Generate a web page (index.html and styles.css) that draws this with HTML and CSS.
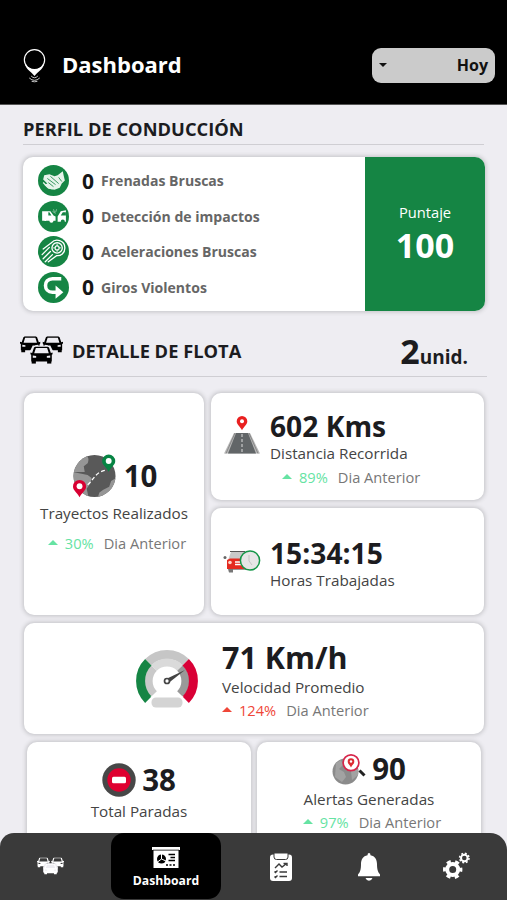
FILE: index.html
```html
<!DOCTYPE html>
<html lang="es">
<head>
<meta charset="utf-8">
<title>Dashboard</title>
<link rel="stylesheet" href="styles.css">
</head>
<body>
<svg class="defs" width="0" height="0">
  <symbol id="car" viewBox="0 0 24 19" preserveAspectRatio="none">
    <path fill-rule="evenodd" d="M5.500 0h13l1.500 1 2 6 2-.5v2L23 9v7.500h-.5V19H18v-2.500H6V19H1.500v-2.500H1V9L0 8.500v-2l2 .5 2-6zM6 1.700L4.200 7.500h15.600L18 1.700zM2.700 10v2.400h3.600V10.500zM21.300 10v2.400h-3.600V10.500z"/>
  </symbol>
  <symbol id="fleet" viewBox="0 0 44 28">
    <use href="#car" x="0" y="0" width="21" height="16.500"/>
    <use href="#car" x="23" y="0" width="21" height="16.500"/>
    <path class="cutout" d="M13 9.500h18l3 6v9H10v-9z"/>
    <use href="#car" x="10.500" y="10.500" width="23" height="17.500"/>
  </symbol>
</svg>
<div class="app">
  <header class="top">
    <svg class="logo" viewBox="0 0 24 36">
      <circle cx="12" cy="12" r="10.600" fill="none" stroke="#fff" stroke-width="1.200"/>
      <path d="M2 16.500C7 23.500 17 23.500 22 16.500c-1.500 6-6.500 8-10 12.500C8.500 24.500 3.500 22.500 2 16.500z" fill="#fff"/>
      <path d="M8.500 29q3.500 3.500 7 0M6.500 31q5.500 5 11 0M9 34.500q3 1 6 0" fill="none" stroke="#ccc" stroke-width="1"/>
    </svg>
    <h1>Dashboard</h1>
    <div class="select"><i class="caret"></i><span>Hoy</span></div>
  </header>

  <main>
    <h2 class="title profile-title"><span>PERFIL DE CONDUCCIÓN</span></h2>
    <section class="card profile">
      <ul>
        <li>
          <svg viewBox="0 0 30 30"><circle cx="15" cy="15" r="15" fill="#158544"/><path d="M6 10l5-1 5 2 3-1 5-4 1 5 1 4-3 3-2 4-5 2-6-1-4-4 3-1-4-4z" fill="#e6f3ea"/><path d="M9 13l8 6M12 11l8 7M20 12l3 4M10 17l5 4" stroke="#158544" stroke-width=".8"/><path d="M5 17l4 4 5 2" stroke="#e6f3ea" fill="none" stroke-width="1.300"/></svg>
          <b>0</b><span>Frenadas Bruscas</span>
        </li>
        <li>
          <svg viewBox="0 0 30 30"><circle cx="15" cy="15" r="15" fill="#158544"/><path d="M4 10h8l3 4 2 1v4h-2a2 2 0 0 1-4 0H8a2 2 0 0 1-2 0H4zM19 20v-5l3-5 5-1v11h-1a2 2 0 0 0-4 0z" fill="#fff"/><path d="M11 11l2 3h-3v-3zM22 14l2-3h3v3z" fill="#158544"/><path d="M15 8l1 3M18 8l-1 3M14 10l3 2" stroke="#a9d2b7" stroke-width=".7"/></svg>
          <b>0</b><span>Detección de impactos</span>
        </li>
        <li>
          <svg viewBox="0 0 30 30"><circle cx="15" cy="15" r="15" fill="#158544"/><g fill="none" stroke="#fff" stroke-width="1.300" stroke-linecap="round"><path d="M13 6.500C17 2 26 4 26 11.500c0 5-4 8-8 7.500L10 25M13 6.500l-8 6M11 11l-7 7M12 15l-7 7M14 18l-7 7"/><circle cx="18.500" cy="11.500" r="5"/><circle cx="18.500" cy="11.500" r="2" stroke-width="1"/><path d="M18.500 8v2M18.500 13v2M15 11.500h2M20 11.500h2" stroke-width=".8"/></g></svg>
          <b>0</b><span>Aceleraciones Bruscas</span>
        </li>
        <li>
          <svg viewBox="0 0 30 30"><circle cx="15" cy="15" r="15" fill="#158544"/><path d="M22.500 6.500H14C5 6.500 5 19.500 14 19.500h5" fill="none" stroke="#fff" stroke-width="3.400"/><path d="M17 13l7.500 6.500L17 26z" fill="#fff"/></svg>
          <b>0</b><span>Giros Violentos</span>
        </li>
      </ul>
      <div class="score"><span>Puntaje</span><strong>100</strong></div>
    </section>

    <div class="title fleet-title">
      <svg class="fleet-icon"><use href="#fleet"/></svg>
      <h2>DETALLE DE FLOTA</h2>
      <p><strong>2</strong><b>unid.</b></p>
    </div>

    <div class="grid">
      <section class="card trips">
        <div class="figure">
          <svg width="44" height="44" viewBox="0 0 45 44"><defs><clipPath id="g1"><circle cx="22" cy="22" r="21.500"/></clipPath></defs><g clip-path="url(#g1)"><path fill="#595959" d="M0 0h45v44H0z"/><path fill="#969696" d="M4 0h8c5 3 4 6 3 9l-4 3 1 6-8 0H0V4zM0 18l10 2 5 1 4 3-1 5-4 6 2 9H0zM44 24l-5 3-2 6-6 3-4 3-2 6h19z"/></g><path d="M15 31c7-6 8-14 20-15" fill="none" stroke="#fff" stroke-width="1.300" stroke-dasharray="4 2.500"/><path d="M36.500 0a6.700 6.700 0 0 1 6.700 6.700c0 4-4 6-6.700 11-2.700-5-6.700-7-6.700-11A6.700 6.700 0 0 1 36.500 0z" fill="#078443"/><circle cx="36.500" cy="6.700" r="3" fill="#fff"/><path d="M6.700 26a6.700 6.700 0 0 1 6.700 6.700c0 4-4 6-6.700 11-2.700-5-6.700-7-6.700-11A6.700 6.700 0 0 1 6.700 26z" fill="#d80032"/><circle cx="6.700" cy="32.500" r="3" fill="#fff"/></svg>
          <strong>10</strong>
        </div>
        <p class="label">Trayectos Realizados</p>
        <p class="trend"><i class="up"></i><em>30%</em><span>Dia Anterior</span></p>
      </section>
      <section class="card distance">
        <svg width="36" height="38" viewBox="0 0 36 38"><path d="M10 17h16l10 20.500H0z" fill="#b7b7b7"/><path d="M12 17h12l8 20.500H4z" fill="#626668"/><path d="M11 17L2 37.500M25 17l9 20.500" stroke="#888" stroke-width="1"/><path d="M18 18v19" stroke="#ddd" stroke-width="1" stroke-dasharray="3 2"/><path d="M18 0a5.300 5.300 0 0 1 5.300 5.300c0 3.500-3.300 5-5.300 9-2-4-5.300-5.500-5.300-9A5.300 5.300 0 0 1 18 0z" fill="#e92020"/><circle cx="18" cy="5.300" r="2" fill="#fff"/></svg>
        <div class="copy">
          <strong>602 Kms</strong>
          <p class="label">Distancia Recorrida</p>
          <p class="trend"><i class="up"></i><em>89%</em><span>Dia Anterior</span></p>
        </div>
      </section>
      <section class="card hours">
        <svg width="38" height="24" viewBox="0 0 38 24"><path d="M8 3h18v8H5z" fill="#c9c9c9"/><path d="M7 2.500h15" stroke="#555" stroke-width="1"/><circle cx="2" cy="8.500" r="1.500" fill="#666"/><path d="M4 11l3-1.500h16V20H4z" fill="#e42a20"/><path d="M12 15.500h9M12 13h9" stroke="#fff" stroke-width="1.300"/><circle cx="7" cy="13.500" r="1.800" fill="#ffd5c8"/><path d="M5 20h5v3.500H6z" fill="#777"/><path d="M10 20.500h14" stroke="#999"/><circle cx="27" cy="11.500" r="9.600" fill="#e6e6e6" stroke="#149647" stroke-width="1.500"/><path d="M26 6v6l3 4" fill="none" stroke="#bbb" stroke-width=".8"/></svg>
        <div class="copy">
          <strong>15:34:15</strong>
          <p class="label">Horas Trabajadas</p>
        </div>
      </section>
      <section class="card speed">
        <svg width="62" height="58" viewBox="0 0 62 58"><g fill="none"><path d="M12.300 12.300A26.500 26.500 0 0 1 49.700 12.300" stroke="#c6c6c6" stroke-width="9"/><path d="M18 44A18.400 18.400 0 0 1 18 18" stroke="#c9c9c9" stroke-width="8"/><path d="M18 18A18.400 18.400 0 0 1 44 18" stroke="#dadada" stroke-width="8"/><path d="M44 18A18.400 18.400 0 0 1 44 44" stroke="#999" stroke-width="8"/><path d="M12.300 49.700A26.500 26.500 0 0 1 12.300 12.300" stroke="#158544" stroke-width="9"/><path d="M49.700 12.300A26.500 26.500 0 0 1 49.700 49.700" stroke="#d90036" stroke-width="9"/></g><path d="M29.500 29.200L49 20 32.500 33z" fill="#444"/><circle cx="31" cy="31" r="2.500" fill="#fff" stroke="#444" stroke-width="1.700"/><path d="M14 47q8-4 17-4t17 4z" fill="#fff"/><rect x="15.500" y="47.500" width="31" height="10" rx="4.500" fill="#d4d4d4"/></svg>
        <div class="copy">
          <strong>71 Km/h</strong>
          <p class="label">Velocidad Promedio</p>
          <p class="trend bad"><i class="up"></i><em>124%</em><span>Dia Anterior</span></p>
        </div>
      </section>
    </div>
    <div class="bottom-row">
      <section class="card stops">
        <div class="figure">
          <svg width="34" height="34" viewBox="0 0 34 34"><circle cx="17" cy="17" r="16.700" fill="#474747"/><circle cx="17" cy="17" r="11.700" fill="#df0030"/><rect x="10" y="13.700" width="14" height="6.600" rx="1.500" fill="#fff"/></svg>
          <strong>38</strong>
        </div>
        <p class="label">Total Paradas</p>
      </section>
      <section class="card alerts">
        <div class="figure">
          <svg width="34" height="31" viewBox="0 0 34 31"><circle cx="13.500" cy="17.500" r="13" fill="#8b8b8b"/><path d="M4 9l5-3 2 5-4 4 5 3 2 5-4 5-7-5zM19 17l7-2v6l-6 5z" fill="#a2a2a2"/><path d="M27.500 16.500l5 5" stroke="#222" stroke-width="3"/><circle cx="19" cy="8.800" r="7.900" fill="#fff" stroke="#d7264b" stroke-width="1.700"/><path d="M19 4.200a3.300 3.300 0 0 1 3.300 3.300c0 2.500-2 3.300-3.300 5.900-1.300-2.600-3.300-3.400-3.300-5.900A3.300 3.300 0 0 1 19 4.200z" fill="#dd2b32"/><circle cx="19" cy="7.500" r="1.200" fill="#fff"/></svg>
          <strong>90</strong>
        </div>
        <p class="label">Alertas Generadas</p>
        <p class="trend"><i class="up"></i><em>97%</em><span>Dia Anterior</span></p>
      </section>
    </div>
  </main>

  <nav>
    <a class="n-fleet"><svg width="27" height="18"><use href="#fleet"/></svg></a>
    <a class="n-dash active">
      <svg width="28" height="22" viewBox="0 0 28 22"><path d="M0 0h28v3H0zM1.500 3.500h25V21h-25z" fill="#fff"/><path d="M1 2.500h26" stroke="#888" stroke-width=".6"/><circle cx="9.500" cy="12" r="4.500" fill="#000"/><path d="M9.500 12V7M9.500 12l4.500 2M9.500 12l-4 3" stroke="#fff" stroke-width="1"/><path d="M16.500 7.500H23M18.500 10.500H23M16.500 13.500H23M14 18h2M17.500 18h2M21 18h2" stroke="#000" stroke-width="1.600"/></svg>
      <span>Dashboard</span>
    </a>
    <a class="n-list"><svg width="22" height="28" viewBox="0 0 22 28"><rect x="0" y="1.500" width="22" height="26.500" rx="3" fill="#fff"/><path d="M4 0h14v4q0 2.500-2.500 2.500h-9Q4 6.500 4 4z" fill="#fff" stroke="#3a3a3a" stroke-width="1"/><path d="M5 15l4-4 3 3 4-3M13.500 10.500H17V13M4.500 18.500l1 1 2-2M4.500 23.500l1 1 2-2M9.500 19H17M9.500 23.500H17" fill="none" stroke="#3a3a3a" stroke-width="1.400"/></svg></a>
    <a class="n-bell"><svg width="22" height="28" viewBox="0 0 22 28"><path d="M11 0q1.500 0 1.500 2.200C17 3 19 6.500 19 11c0 6 1 8 3 10.500v1.700H0v-1.700C2 19 3 17 3 11c0-4.500 2-8 6.500-8.800Q9.500 0 11 0zM7.500 25h7q-1 2.700-3.500 2.700T7.500 25z" fill="#fff"/></svg></a>
    <a class="n-gear"><svg width="27" height="28" viewBox="0 0 27 28"><g fill="none" stroke="#fff"><circle cx="9.700" cy="17.500" r="5.500" stroke-width="4"/><circle cx="9.700" cy="17.500" r="8.300" stroke-width="2.800" stroke-dasharray="4.200 4.492" stroke-dashoffset="2.100"/><circle cx="21.300" cy="6" r="3.300" stroke-width="2"/><circle cx="21.300" cy="6" r="4.700" stroke-width="1.600" stroke-dasharray="1.900 1.791"/></g></svg></a>
  </nav>
</div>
</body>
</html>
```
FILE: styles.css
```css
* { box-sizing: border-box; margin: 0; padding: 0; }
body { width: 507px; height: 900px; overflow: hidden; background: #eeedf2; font-family: "Open Sans", "Noto Sans", sans-serif; color: #1c1c1f; }
.defs { display: block; height: 0; }
.app { height: 900px; display: flex; flex-direction: column; position: relative; }
svg { display: block; flex: none; }
ul { list-style: none; }
i, em { font-style: normal; }

.top { height: 105px; flex: none; background: #000; border-bottom: 1px solid #555; display: flex; align-items: center; padding: 26px 12px 0 23px; color: #fff; }
.logo { width: 23px; height: 35px; }
.top h1 { margin: 0 0 2px 16px; font-size: 22px; line-height: 30px; }
.select { margin-left: auto; width: 123px; height: 35px; border-radius: 9px; background: #cbcbcb; color: #111; display: flex; align-items: center; justify-content: space-between; padding: 0 7px 0 7px; font-size: 16px; font-weight: 700; }
.caret { border: 4.500px solid transparent; border-top-color: #111; border-bottom: 0; }

main { flex: 1; min-height: 0; overflow: hidden; }
.title { border-bottom: 1.500px solid #cfced3; }
.profile-title { height: 40px; margin: 0 23px; padding-top: 11px; font-size: 18.300px; line-height: 26px; white-space: nowrap; }
.card { background: #fff; border-radius: 10px; box-shadow: 0 0 4px 1px #c2c2c6; }
.profile { margin: 12px 22px 0 23px; height: 154px; display: flex; overflow: hidden; }
.profile ul { width: 342px; padding: 6px 0 0 15px; }
.profile li { height: 35.500px; display: flex; align-items: center; font-size: 14.050px; font-weight: 700; color: #666; }
.profile li svg { width: 31px; height: 31px; }
.profile li b { width: 14px; margin: 0 5px 0 13px; font-size: 21px; color: #161616; font-weight: 700; }
.score { flex: 1; background: #158544; color: #fff; display: flex; flex-direction: column; align-items: center; padding-top: 44px; }
.score span { font-size: 14.700px; line-height: 22px; }
.score strong { font-size: 34px; line-height: 44px; }

.fleet-title { height: 66px; margin: 0 20px; display: flex; align-items: flex-start; }
.fleet-icon { width: 43px; height: 28px; margin-top: 25px; }
.cutout { fill: #eeedf2; }
.fleet-title h2 { margin: 27px 0 0 9px; font-size: 18.300px; line-height: 26px; }
.fleet-title p { margin: 18px 19px 0 auto; line-height: 44px; white-space: nowrap; }
.fleet-title p strong { font-size: 34px; }
.fleet-title p b { font-size: 19px; }

.grid { margin: 16px 23px 0 24px; display: grid; grid-template-columns: 180px 273px; grid-template-rows: 107px 107px 111px; gap: 8px 7px; }
.trips { grid-row: span 2; padding-top: 61px; }
.figure { display: flex; align-items: center; justify-content: center; }
.figure strong { font-size: 29.500px; line-height: 40px; }
.copy strong { display: block; font-size: 28.200px; line-height: 32px; white-space: nowrap; }
.label { font-size: 15.250px; line-height: 22px; color: #444; white-space: nowrap; }
.trips .label, .stops .label, .alerts .label { text-align: center; }
.trend { display: flex; align-items: center; font-size: 14.650px; line-height: 22px; color: #777; white-space: nowrap; }
.trend em { color: #66e3a3; margin: 0 10px 0 7px; }
.up { border: 5px solid transparent; border-bottom-color: #66e3a3; border-top: 0; margin-top: -2px; }
.bad em { color: #ef4638; }
.bad .up { border-bottom-color: #ef4638; }
.trips .figure { gap: 7px; height: 44px; padding-left: 2px; }
.trips .label { margin-top: 4px; }
.trips .trend { justify-content: center; margin-top: 8px; margin-left: 6px; }
.distance, .hours { display: flex; }
.distance > svg { margin: 23px 10px 0 13px; }
.distance .copy { padding-top: 17px; }
.distance .trend { margin: 2px 0 0 12px; }
.hours > svg { margin: 41px 9px 0 12px; }
.hours .copy { padding-top: 29px; }
.speed { grid-column: span 2; display: flex; }
.speed > svg { margin: 27px 24px 0 112px; }
.speed .copy { padding-top: 17px; }
.speed .copy strong { font-size: 30.500px; line-height: 34px; }
.speed .label { margin-top: 2px; }
.speed .trend { margin-top: 1px; }
.bottom-row { display: flex; gap: 6px; margin: 8px 26px 0 27px; }
.bottom-row .card { width: 224px; height: 120px; }
.stops .figure { gap: 6px; padding-top: 18px; }
.alerts { padding-top: 7px; }
.alerts .figure { gap: 6px; }
.alerts .label { margin-top: -1px; }
.alerts .trend { justify-content: center; margin-top: 1px; margin-left: 6px; }

nav { flex: none; height: 67px; background: #3a3a3a; border-radius: 14px 17px 0 0; display: flex; color: #fff; fill: #fff; }
nav a { flex: none; display: flex; justify-content: center; padding-top: 20px; }
nav .cutout { fill: #3a3a3a; }
.n-fleet { width: 101px; margin-right: 10px; }
.n-fleet svg { margin-top: 4px; }
nav .active { width: 110px; height: 66px; background: #000; border-radius: 13px; flex-direction: column; justify-content: flex-start; align-items: center; padding-top: 14px; }
.active span { font-size: 12.200px; line-height: 18px; font-weight: 700; margin-top: 3px; }
.n-list { width: 120px; }
.n-bell { width: 56px; }
nav .n-gear { width: 110px; padding: 19px 0 0 9px; }
```
